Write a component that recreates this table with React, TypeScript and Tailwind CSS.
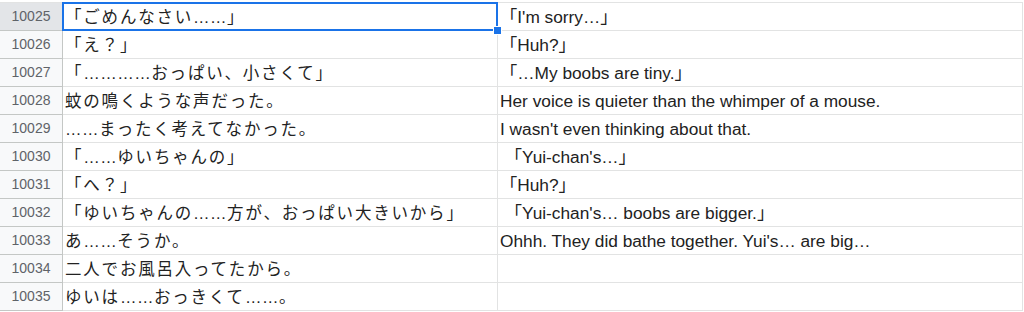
import React from "react";

const rows: { n: number; ja: string; en: string }[] = [
  { n: 10025, ja: "「ごめんなさい……」", en: "「I'm sorry…」" },
  { n: 10026, ja: "「え？」", en: "「Huh?」" },
  { n: 10027, ja: "「…………おっぱい、小さくて」", en: "「…My boobs are tiny.」" },
  { n: 10028, ja: "蚊の鳴くような声だった。", en: "Her voice is quieter than the whimper of a mouse." },
  { n: 10029, ja: "……まったく考えてなかった。", en: "I wasn't even thinking about that." },
  { n: 10030, ja: "「……ゆいちゃんの」", en: " 「Yui-chan's…」" },
  { n: 10031, ja: "「へ？」", en: "「Huh?」" },
  { n: 10032, ja: "「ゆいちゃんの……方が、おっぱい大きいから」", en: " 「Yui-chan's… boobs are bigger.」" },
  { n: 10033, ja: "あ……そうか。", en: "Ohhh. They did bathe together. Yui's… are big…" },
  { n: 10034, ja: "二人でお風呂入ってたから。", en: "" },
  { n: 10035, ja: "ゆいは……おっきくて……。", en: "" },
];

// ellipsis comes from the latin font, so keep its dots evenly spaced
const JaText = ({ text }: { text: string }) => (
  <>
    {text.split(/(…+)/).map((part, i) =>
      part.startsWith("…") ? (
        <span key={i} className="tracking-[0.5px]">
          {part}
        </span>
      ) : (
        <span key={i}>{part}</span>
      )
    )}
  </>
);

const App = () => {
  return (
    <div className="w-[1024px] h-[312px] overflow-hidden bg-white pt-[2px] font-['Liberation_Sans','Noto_Sans_CJK_JP',sans-serif]">
      <div className="w-[1023px] border-t border-[#e2e3e3]">
        {rows.map((r, i) => (
          <div key={r.n} className="grid grid-cols-[63px_435px_525px] h-[28px]">
            {/* Row header */}
            <div
              className={`flex items-center justify-center border-r border-b border-[#c4c7c5] text-[14px] text-[#5f6368] ${
                i === 0 ? "bg-[#e3e5e8]" : "bg-[#f8f9fa]"
              }`}
            >
              {r.n}
            </div>

            {/* Japanese column */}
            <div className="relative flex items-center border-r border-b border-[#e2e3e3] pl-[2px] pt-[2px] text-[16.5px] tracking-[1.8px] text-[#222] whitespace-pre">
              <JaText text={r.ja} />
              {i === 0 && (
                <>
                  <div className="absolute z-10 left-[-1px] top-[-1px] right-[-1px] bottom-[-1px] shadow-[inset_0_0_0_2px_#1a73e8]" />
                  <div className="absolute z-20 right-[-4px] bottom-[-4px] w-[7px] h-[7px] bg-[#1a73e8] shadow-[0_0_0_1px_#ffffff]" />
                </>
              )}
            </div>

            {/* English column */}
            <div className="flex items-center border-r border-b border-[#e2e3e3] pl-[2px] pt-[2px] text-[17.3px] text-[#222] whitespace-pre overflow-hidden">
              {r.en}
            </div>
          </div>
        ))}
      </div>
    </div>
  );
};

export default App;
